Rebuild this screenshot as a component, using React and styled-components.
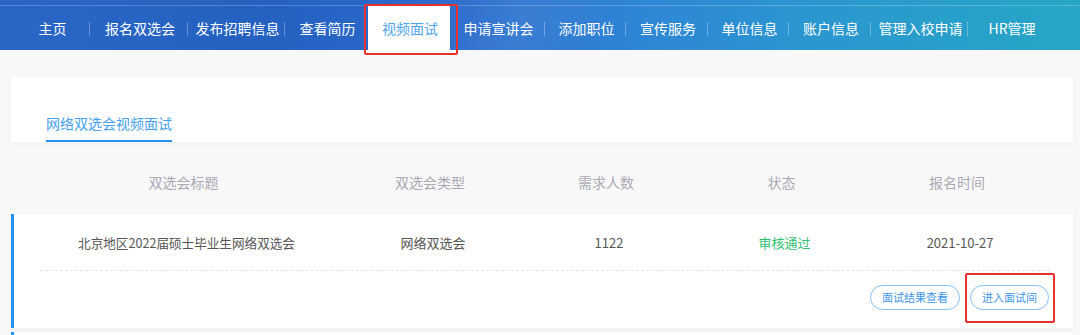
import React from "react";
import styled, { createGlobalStyle } from "styled-components";

const GlobalStyle = createGlobalStyle`
  html, body {
    margin: 0;
    padding: 0;
    overflow: hidden;
    background: #f8f8f8;
    font-family: "Noto Sans CJK SC", "Noto Sans", sans-serif;
  }
`;

const Page = styled.div`
  width: 1080px;
  height: 335px;
  overflow: hidden;
  background: #f8f8f8;
`;

const NavBar = styled.div`
  height: 50px;
  box-sizing: border-box;
  padding: 6px 0 0 13px;
  display: flex;
  background:
    linear-gradient(to bottom, transparent 5px, rgba(255,255,255,0.22) 5px, rgba(255,255,255,0.22) 6px, transparent 6px),
    linear-gradient(115deg, transparent 40%, rgba(255,255,255,0.06) 48%, transparent 56%),
    linear-gradient(90deg, #2966c6 0%, #2461c1 25%, #2d6ccd 42%, #2f84d6 58%, #2b96d0 74%, #26a6c6 100%);
`;

const NavItem = styled.div`
  position: relative;
  width: ${p => p.$w}px;
  height: 44px;
  line-height: 44px;
  padding-left: 2px;
  box-sizing: border-box;
  text-align: center;
  font-size: 14px;
  color: ${p => (p.$active ? "#4ea5ef" : "#ffffff")};
  background: ${p => (p.$active ? "#ffffff" : "transparent")};
  white-space: nowrap;
  &::after {
    content: "";
    display: ${p => (p.$sep ? "block" : "none")};
    position: absolute;
    right: 0;
    top: 16px;
    width: 1px;
    height: 14px;
    background: rgba(255, 255, 255, 0.3);
  }
`;

const Marker = styled.div`
  position: absolute;
  left: ${p => p.$l}px;
  right: ${p => p.$r}px;
  top: ${p => p.$t}px;
  bottom: ${p => p.$b}px;
  border: 2px solid #e8302c;
  border-radius: 2px;
  pointer-events: none;
`;

const TabCard = styled.div`
  margin: 27px 7px 0 11px;
  height: 65px;
  background: #fff;
  box-shadow: 0 2px 6px rgba(0, 0, 0, 0.04);
  display: flex;
  align-items: flex-end;
  padding-left: 35px;
`;

const Tab = styled.div`
  font-size: 14px;
  line-height: 20px;
  color: #45a0f2;
  padding-bottom: 7px;
  border-bottom: 2px solid #2790f6;
`;

const Grid = styled.div`
  display: grid;
  grid-template-columns: 345px 148px 204px 147px 204px;
  align-items: center;
`;

const HeadRow = styled(Grid)`
  height: 40px;
  margin: 20px 7px 12px 11px;
`;

const HeadCell = styled.div`
  text-align: center;
  font-size: 14px;
  color: #aaa9b4;
`;

const RowCard = styled.div`
  margin: 0 7px 4px 11px;
  background: #fff;
  border-left: 3px solid #2492f5;
  box-shadow: 0 2px 6px rgba(0, 0, 0, 0.04);
`;

const NextCard = styled(RowCard)`
  height: 20px;
`;

const DataRow = styled(Grid)`
  height: 56px;
`;

const Cell = styled.div`
  text-align: center;
  font-size: ${p => p.$size || 13}px;
  color: ${p => p.$color || "#555555"};
`;

const Divider = styled.div`
  margin: 0 23px 0 26px;
  border-top: 1px dashed #e3e3e3;
`;

const Actions = styled.div`
  display: flex;
  justify-content: flex-end;
  gap: 10px;
  padding: 14px 24px 18px 0;
`;

const PillButton = styled.button`
  position: relative;
  height: 25px;
  padding: 0 11px;
  border: 1px solid #86c0fb;
  border-radius: 13px;
  background: #fff;
  color: #3e94ea;
  font-family: "Noto Sans CJK SC", sans-serif;
  font-size: 11px;
  line-height: 23px;
  white-space: nowrap;
  cursor: pointer;
`;

const navItems = [
  { label: "主页", w: 77, sep: true },
  { label: "报名双选会", w: 98, sep: true },
  { label: "发布招聘信息", w: 97, sep: true },
  { label: "查看简历", w: 83 },
  { label: "视频面试", w: 82, active: true },
  { label: "申请宣讲会", w: 95, sep: true },
  { label: "添加职位", w: 81, sep: true },
  { label: "宣传服务", w: 82, sep: true },
  { label: "单位信息", w: 81, sep: true },
  { label: "账户信息", w: 82, sep: true },
  { label: "管理入校申请", w: 97, sep: true },
  { label: "HR管理", w: 86 },
];

const columns = ["双选会标题", "双选会类型", "需求人数", "状态", "报名时间"];

const row = {
  title: "北京地区2022届硕士毕业生网络双选会",
  type: "网络双选会",
  num: "1122",
  status: "审核通过",
  date: "2021-10-27",
};

export default function App() {
  return (
    <Page>
      <GlobalStyle />
      <NavBar>
        {navItems.map(item => (
          <NavItem key={item.label} $w={item.w} $sep={item.sep} $active={item.active}>
            {item.label}
            {item.active && <Marker $l={-4} $r={-8} $t={-2} $b={-5} />}
          </NavItem>
        ))}
      </NavBar>

      <TabCard>
        <Tab>网络双选会视频面试</Tab>
      </TabCard>

      <HeadRow>
        {columns.map(c => (
          <HeadCell key={c}>{c}</HeadCell>
        ))}
      </HeadRow>

      <RowCard>
        <DataRow>
          <Cell $size={12.6}>{row.title}</Cell>
          <Cell>{row.type}</Cell>
          <Cell>{row.num}</Cell>
          <Cell $color="#2fbf72">{row.status}</Cell>
          <Cell>{row.date}</Cell>
        </DataRow>
        <Divider />
        <Actions>
          <PillButton>面试结果查看</PillButton>
          <PillButton>
            进入面试间
            <Marker $l={-6} $r={-7} $t={-13} $b={-14} />
          </PillButton>
        </Actions>
      </RowCard>
      <NextCard />
    </Page>
  );
}
